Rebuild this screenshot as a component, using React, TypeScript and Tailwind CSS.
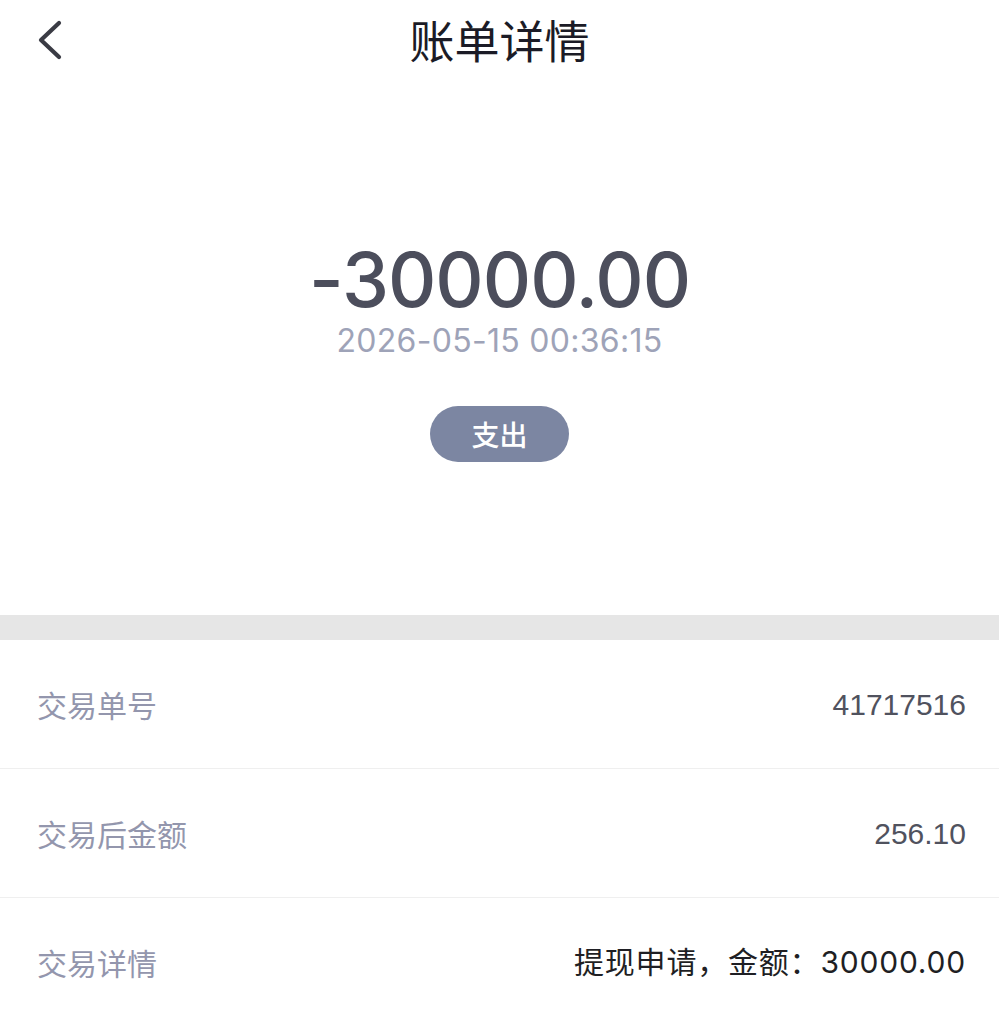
const rows = [
  { label: '交易单号', value: '41717516', dark: false },
  { label: '交易后金额', value: '256.10', dark: false },
  { label: '交易详情', value: '提现申请，金额：30000.00', dark: true },
];

export default function App() {
  return (
    <div
      className="min-h-screen w-full bg-white"
      style={{ fontFamily: 'Inter, "Noto Sans CJK SC", sans-serif' }}
    >
      <header className="relative flex h-[80px] items-center justify-center">
        <button className="absolute left-[36px] top-[20px] text-[#3a3b44]">
          <svg width="26" height="40" viewBox="0 0 26 40" fill="none">
            <path d="M23 3 L5 20 L23 37" stroke="currentColor" strokeWidth="4.2" strokeLinecap="round" strokeLinejoin="round" />
          </svg>
        </button>
        <h1
          className="-mt-[2px] text-[45px] font-normal leading-none text-[#1b1b26]"
          style={{ fontFamily: '"Noto Sans CJK SC", sans-serif' }}
        >
          账单详情
        </h1>
      </header>

      <section className="flex h-[535px] flex-col items-center pt-[168px]">
        <div className="text-[75px] font-medium leading-[64px] tracking-[-1px] text-[#4c4e5c]">-30000.00</div>
        <div className="mt-[13px] text-[32px] leading-none tracking-[0.3px] text-[#9ea3b8]">2026-05-15 00:36:15</div>
        <div
          className="mt-[49px] flex h-[56px] w-[139px] items-center justify-center rounded-full bg-[#7c86a2] text-[28px] font-medium text-white"
          style={{ fontFamily: '"Noto Sans CJK SC", sans-serif' }}
        >
          支出
        </div>
      </section>

      <div className="h-[25px] bg-[#e6e6e6]" />

      <ul>
        {rows.map((r, i) => (
          <li
            key={r.label}
            className={`flex h-[129px] items-center justify-between pl-[37px] pr-[33px] ${i < rows.length - 1 ? 'border-b border-[#efefef]' : ''}`}
          >
            <span className="text-[30px] text-[#9396ad]" style={{ fontFamily: '"Noto Sans CJK SC", sans-serif' }}>
              {r.label}
            </span>
            {r.dark ? (
              <span className="text-[30px] tracking-[0.8px] text-[#1f1f24]">{r.value}</span>
            ) : (
              <span className="text-[30px] text-[#50525e]" style={{ fontFamily: '"Liberation Sans", sans-serif' }}>
                {r.value}
              </span>
            )}
          </li>
        ))}
      </ul>
    </div>
  );
}
